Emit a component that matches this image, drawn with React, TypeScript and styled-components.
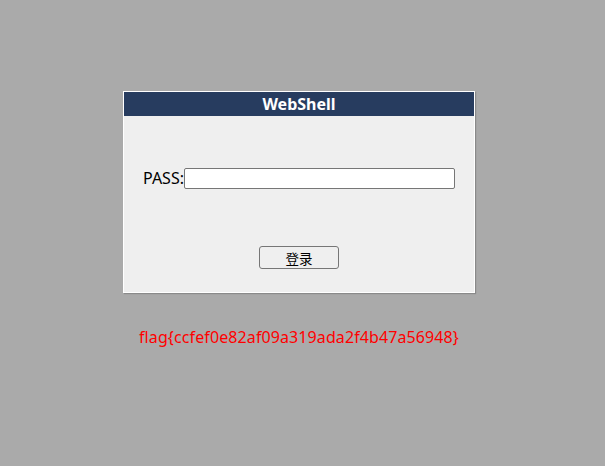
import React from "react";
import styled, { createGlobalStyle } from "styled-components";

const Global = createGlobalStyle`
  html, body { margin: 0; padding: 0; background: #aaaaaa; }
  body { font-family: "Noto Sans", "Noto Sans CJK SC", sans-serif; }
`;

const Page = styled.div`
  display: flex;
  flex-direction: column;
  align-items: center;
  padding: 91px 7px 0 0;
`;

const Panel = styled.form`
  width: 352px;
  box-sizing: border-box;
  border: 1px solid #ffffff;
  box-shadow: 1px 1px 1px #8a8a8a;
  background: #efefef;
  display: flex;
  flex-direction: column;
`;

const Header = styled.div`
  height: 24px;
  background: #273c5f;
  color: #ffffff;
  font-weight: bold;
  font-size: 16px;
  line-height: 24px;
  text-align: center;
`;

const Body = styled.div`
  height: 176px;
  display: flex;
  flex-direction: column;
  align-items: center;
  padding-top: 52px;
  box-sizing: border-box;
`;

const Row = styled.div`
  display: flex;
  align-items: center;
  height: 21px;
`;

const Label = styled.label`
  font-size: 16px;
  color: #000;
  line-height: 21px;
`;

const Input = styled.input`
  width: 271px;
  height: 21px;
  box-sizing: border-box;
  border: 1px solid #767676;
  border-radius: 2px;
  background: #fff;
  padding: 1px 2px;
  margin: 0;
`;

const Button = styled.button`
  margin-top: 57px;
  width: 80px;
  height: 23px;
  box-sizing: border-box;
  border: 1px solid #767676;
  border-radius: 3px;
  background: #efefef;
  font-family: "Noto Sans CJK SC", sans-serif;
  font-size: 13.5px;
  color: #000;
  padding: 0;
`;

const Flag = styled.div`
  margin-top: 33px;
  color: #ff0000;
  font-size: 16px;
  letter-spacing: 0.1px;
`;

export default function App() {
  return (
    <>
      <Global />
      <Page>
        <Panel onSubmit={(e) => e.preventDefault()}>
          <Header>WebShell</Header>
          <Body>
            <Row>
              <Label>PASS:</Label>
              <Input type="password" name="pass" />
            </Row>
            <Button type="submit">登录</Button>
          </Body>
        </Panel>
        <Flag>flag{"{"}ccfef0e82af09a319ada2f4b47a56948{"}"}</Flag>
      </Page>
    </>
  );
}
